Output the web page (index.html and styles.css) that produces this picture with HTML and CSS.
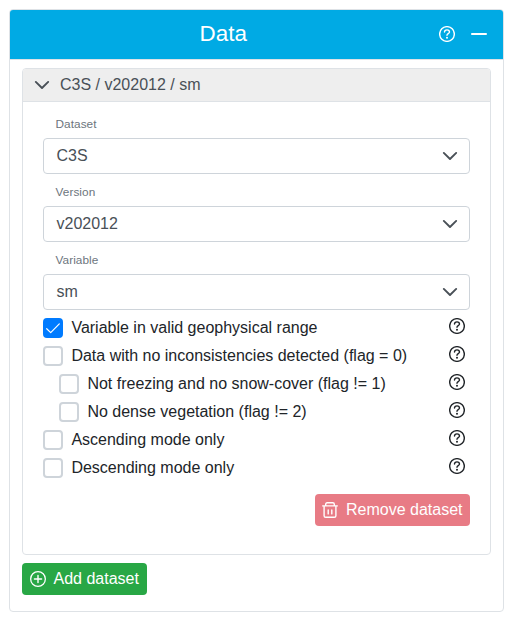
FILE: index.html
```html
<!DOCTYPE html>
<html lang="en">
<head>
<meta charset="utf-8">
<title>Data</title>
<link rel="stylesheet" href="styles.css">
</head>
<body>
<svg class="defs" width="0" height="0" aria-hidden="true">
  <symbol id="chevron" viewBox="0 0 16 16"><path d="M1.800 4.900 8 11l6.200-6.100" fill="none" stroke="currentColor" stroke-width="1.900" stroke-linecap="round" stroke-linejoin="round"/></symbol>
  <symbol id="help" viewBox="0 0 16 16"><circle cx="8" cy="8" r="7.350" fill="none" stroke="currentColor" stroke-width="1.400"/><path d="M5.500 6.100C5.500 4.700 6.600 3.900 8 3.900s2.500.9 2.500 2.200c0 1.500-2.500 1.600-2.500 3.200" fill="none" stroke="currentColor" stroke-width="1.400" stroke-linecap="round"/><circle cx="8" cy="11.800" r="1" fill="currentColor"/></symbol>
</svg>
<section class="card">
  <header class="card-header">
    <h1>Data</h1>
    <div class="card-tools">
      <svg class="icon"><use href="#help"/></svg>
      <svg class="icon" viewBox="0 0 16 16"><path d="M.9 8h14.200" stroke="currentColor" stroke-width="1.800" stroke-linecap="round"/></svg>
    </div>
  </header>
  <div class="card-body">
    <div class="panel">
      <div class="panel-header"><svg class="icon"><use href="#chevron"/></svg><span>C3S / v202012 / sm</span></div>
      <div class="panel-body">
        <div class="field-label">Dataset</div>
        <div class="select"><span>C3S</span><svg class="icon"><use href="#chevron"/></svg></div>
        <div class="field-label">Version</div>
        <div class="select"><span>v202012</span><svg class="icon"><use href="#chevron"/></svg></div>
        <div class="field-label">Variable</div>
        <div class="select"><span>sm</span><svg class="icon"><use href="#chevron"/></svg></div>
        <div class="filters">
          <div class="filter"><span class="box checked"><svg viewBox="0 0 14 14"><path d="M.7 7.700 4.700 11.600 13.300 2.900" fill="none" stroke="currentColor" stroke-width="1.200" stroke-linecap="round" stroke-linejoin="round"/></svg></span><span class="filter-name">Variable in valid geophysical range</span><svg class="icon"><use href="#help"/></svg></div>
          <div class="filter"><span class="box"></span><span class="filter-name">Data with no inconsistencies detected (flag = 0)</span><svg class="icon"><use href="#help"/></svg></div>
          <div class="filter nested"><span class="box"></span><span class="filter-name">Not freezing and no snow-cover (flag != 1)</span><svg class="icon"><use href="#help"/></svg></div>
          <div class="filter nested"><span class="box"></span><span class="filter-name">No dense vegetation (flag != 2)</span><svg class="icon"><use href="#help"/></svg></div>
          <div class="filter"><span class="box"></span><span class="filter-name">Ascending mode only</span><svg class="icon"><use href="#help"/></svg></div>
          <div class="filter"><span class="box"></span><span class="filter-name">Descending mode only</span><svg class="icon"><use href="#help"/></svg></div>
        </div>
        <button class="button remove" disabled><svg class="icon" viewBox="0 0 16 16"><g fill="none" stroke="currentColor" stroke-width="1.400" stroke-linecap="round" stroke-linejoin="round"><path d="M.7 3.900h14.600M3.700 3.700V2.300q0-1.500 1.500-1.500h5.600q1.500 0 1.500 1.500v1.400M2.100 3.900v9.800q0 1.600 1.600 1.600h8.600q1.600 0 1.600-1.600V3.900M6.200 7.900v4M9.800 7.900v4"/></g></svg><span>Remove dataset</span></button>
      </div>
    </div>
    <button class="button add"><svg class="icon" viewBox="0 0 16 16"><path d="M8 4.400v7.200M4.400 8h7.200" stroke="currentColor" stroke-width="1.400" stroke-linecap="round"/><circle cx="8" cy="8" r="7.350" fill="none" stroke="currentColor" stroke-width="1.300"/></svg><span>Add dataset</span></button>
  </div>
</section>
</body>
</html>
```
FILE: styles.css
```css
* { box-sizing: border-box; }
body {
  margin: 0;
  padding: 9px 6px 8px 9px;
  background: #fff;
  color: #212529;
  font: 16px/24px "Liberation Sans", Arial, sans-serif;
}
.defs { position: absolute; }
.icon { display: block; flex: none; width: 16px; height: 16px; }
.card {
  height: 603px;
  border: 1px solid #dee2e6;
  border-radius: 4px;
  overflow: hidden;
}
.card-header {
  display: grid;
  grid-template-columns: 173.600px auto 1fr;
  align-items: center;
  height: 50px;
  padding: 0 16px;
  background: #00aae4;
  border-bottom: 1px solid #dee2e6;
  color: #fff;
}
.card-header h1 {
  grid-column: 2;
  margin: 0 0 2px;
  font-size: 22.4px;
  font-weight: 400;
}
.card-tools { display: flex; justify-content: flex-end; gap: 16px; margin-bottom: 1px; }
.card-body { padding: 8px 12px; }
.panel {
  height: 487px;
  border: 1px solid #dee2e6;
  border-radius: 4px;
  overflow: hidden;
}
.panel-header {
  display: flex;
  align-items: center;
  gap: 10px;
  height: 33px;
  padding-left: 11px;
  background: #eee;
  border-bottom: 1px solid #dee2e6;
  color: #495057;
}
.panel-body { display: flex; flex-direction: column; padding: 12px 20px; }
.field-label {
  height: 24px;
  padding-left: 12.5px;
  color: #6c757d;
  font-size: 11.8px;
  letter-spacing: .06px;
  line-height: 21px;
}
.select {
  display: flex;
  align-items: center;
  justify-content: space-between;
  height: 36px;
  margin-bottom: 8px;
  padding: 0 11px 0 12.5px;
  border: 1px solid #ced4da;
  border-radius: 4px;
  color: #495057;
}
.filter { display: flex; align-items: center; height: 28px; padding-right: 5px; }
.filter.nested { padding-left: 16px; }
.filter .icon { margin-bottom: 4px; }
.filter-name { flex: 1; margin-left: 8.400px; }
.box {
  width: 20px;
  height: 20px;
  border: 2px solid #ced4da;
  border-radius: 4px;
}
.box.checked { padding: 1px; border-color: #007bff; background: #007bff; color: #fff; }
.box svg { display: block; width: 14px; height: 14px; }
.filters { margin-top: -4px; }
.button {
  display: flex;
  align-items: center;
  gap: 8px;
  height: 32px;
  padding: 0 8px;
  border: 0;
  border-radius: 4px;
  color: #fff;
  font: inherit;
}
.remove { align-self: flex-end; gap: 8px; width: 155px; margin-top: 12px; padding: 0 7px; background: #dc3545; opacity: .65; }
.add { gap: 7.500px; margin-top: 8px; background: #28a745; }
```
